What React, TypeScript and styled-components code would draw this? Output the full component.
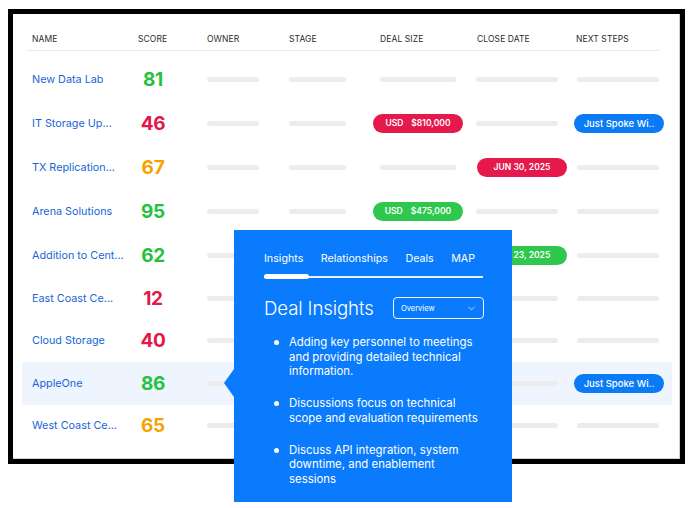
import React from "react";
import styled, { createGlobalStyle } from "styled-components";
import { ChevronDown } from "lucide-react";

const GlobalStyle = createGlobalStyle`
  html, body { margin: 0; padding: 0; background: #fff; }
  body { font-family: Inter, "Noto Sans", "Liberation Sans", sans-serif; -webkit-font-smoothing: antialiased; }
  * { box-sizing: border-box; }
`;

const COLS = "106px 69px 82px 84px 103px 98px 1fr";

const Page = styled.div`
  position: relative;
  width: 688px;
  height: 508px;
  padding: 9px 0 0 8px;
  overflow: hidden;
  background: #fff;
`;

const Screen = styled.div`
  width: 677px;
  height: 455px;
  border: 5px solid #000;
  box-shadow: inset -1px -1px 0 #cfcfcf;
  background: #fff;
  padding: 14px 0 0 9px;
`;

const Table = styled.div`
  width: 650px;
  display: flex;
  flex-direction: column;
`;

const HeaderRow = styled.div`
  display: grid;
  grid-template-columns: ${COLS};
  align-items: center;
  height: 23px;
  margin: 0 12px 6px 5px;
  padding-left: 5px;
  border-bottom: 1.5px solid #ebebeb;
`;

const HeaderCell = styled.div<{ $offset?: number }>`
  font-size: 8.5px;
  letter-spacing: 0.1px;
  color: #2b2b2b;
  text-transform: uppercase;
  padding-left: ${(p) => p.$offset ?? 0}px;
  white-space: nowrap;
`;

const Row = styled.div<{ $active?: boolean; $tall?: boolean }>`
  display: grid;
  grid-template-columns: ${COLS};
  align-items: center;
  height: ${(p) => (p.$tall ? 44 : 42.5)}px;
  padding-left: 10px;
  background: ${(p) => (p.$active ? "#eef5fe" : "transparent")};
`;

const Name = styled.div`
  font-size: 10.8px;
  color: #1766d4;
  white-space: nowrap;
`;

const Score = styled.div<{ $color: string }>`
  width: 30px;
  text-align: center;
  font-size: 19px;
  font-weight: 700;
  letter-spacing: -0.3px;
  color: ${(p) => p.$color};
`;

const Bar = styled.div<{ $w: number; $offset: number }>`
  width: ${(p) => p.$w}px;
  height: 5px;
  margin-left: ${(p) => p.$offset}px;
  border-radius: 3px;
  background: #ececec;
`;

const Pill = styled.div<{ $bg: string; $offset: number; $size?: number; $weight?: number }>`
  width: 90px;
  height: 19px;
  margin-left: ${(p) => p.$offset}px;
  border-radius: 10px;
  background: ${(p) => p.$bg};
  color: #fff;
  font-size: ${(p) => p.$size ?? 8.5}px;
  font-weight: ${(p) => p.$weight ?? 600};
  display: flex;
  align-items: center;
  justify-content: center;
  gap: 8px;
  white-space: nowrap;
`;

const Popup = styled.div`
  position: absolute;
  left: 234px;
  top: 230px;
  width: 278px;
  height: 272px;
  background: #0a7bfc;
  color: #fff;
  padding: 22px 28px 0 30px;
  &::before {
    content: "";
    position: absolute;
    left: -10px;
    top: 139px;
    border-right: 10px solid #0a7bfc;
    border-top: 14px solid transparent;
    border-bottom: 14px solid transparent;
  }
`;

const Tabs = styled.div`
  display: flex;
  gap: 17.5px;
  font-size: 10.7px;
  line-height: 14px;
  white-space: nowrap;
`;

const Tab = styled.div`
  color: #fff;
`;

const Track = styled.div`
  position: relative;
  width: 219px;
  height: 1.5px;
  margin-top: 10px;
  background: rgba(255, 255, 255, 0.9);
  &::before {
    content: "";
    position: absolute;
    left: 0;
    top: -1.75px;
    width: 45px;
    height: 5px;
    border-radius: 3px;
    background: #fff;
  }
`;

const TitleRow = styled.div`
  display: flex;
  align-items: center;
  justify-content: space-between;
  width: 220px;
  margin-top: 19.5px;
`;

const Title = styled.div`
  font-size: 18.6px;
  font-weight: 300;
  letter-spacing: -0.1px;
`;

const Select = styled.div`
  width: 91px;
  height: 22px;
  border: 1px solid rgba(255, 255, 255, 0.95);
  border-radius: 4px;
  display: flex;
  align-items: center;
  justify-content: space-between;
  padding: 0 6px 0 7px;
  font-size: 7.5px;
`;

const List = styled.ul`
  list-style: none;
  margin: 16px 0 0;
  padding: 0 0 0 25px;
  width: 220px;
  display: flex;
  flex-direction: column;
  gap: 17.5px;
`;

const Item = styled.li`
  position: relative;
  font-size: 11.4px;
  line-height: 14.5px;
  &::before {
    content: "";
    position: absolute;
    left: -15px;
    top: 5px;
    width: 5px;
    height: 5px;
    border-radius: 50%;
    background: #fff;
  }
`;

type Cell =
  | { kind: "bar" }
  | { kind: "pill"; bg: string; text: React.ReactNode; size?: number; weight?: number };

const RED = "#e5194b";
const GREEN = "#2ec84f";
const BLUE = "#0a7bf5";
const SCORE_GREEN = "#24c13e";
const SCORE_RED = "#e4164a";
const SCORE_ORANGE = "#f6a300";

const bar: Cell = { kind: "bar" };
const usd = (v: string, bg: string): Cell => ({
  kind: "pill",
  bg,
  text: (
    <>
      <span>USD</span>
      <span>{v}</span>
    </>
  ),
});
const datePill = (v: string, bg: string): Cell => ({ kind: "pill", bg, text: v });
const nextPill: Cell = { kind: "pill", bg: BLUE, text: "Just Spoke Wi..", size: 9.5, weight: 500 };

const rows: {
  name: string;
  score: number;
  color: string;
  deal: Cell;
  close: Cell;
  next: Cell;
  active?: boolean;
  tall?: boolean;
}[] = [
  { name: "New Data Lab", score: 81, color: SCORE_GREEN, deal: bar, close: bar, next: bar, tall: true },
  { name: "IT Storage Up...", score: 46, color: SCORE_RED, deal: usd("$810,000", RED), close: bar, next: nextPill, tall: true },
  { name: "TX Replication...", score: 67, color: SCORE_ORANGE, deal: bar, close: datePill("JUN 30, 2025", RED), next: bar, tall: true },
  { name: "Arena Solutions", score: 95, color: SCORE_GREEN, deal: usd("$475,000", GREEN), close: bar, next: bar, tall: true },
  { name: "Addition to Cent...", score: 62, color: SCORE_GREEN, deal: bar, close: datePill("JUN 23, 2025", GREEN), next: bar, tall: true },
  { name: "East Coast Ce...", score: 12, color: SCORE_RED, deal: bar, close: bar, next: bar },
  { name: "Cloud Storage", score: 40, color: SCORE_RED, deal: bar, close: bar, next: bar },
  { name: "AppleOne", score: 86, color: SCORE_GREEN, deal: bar, close: bar, next: nextPill, active: true },
  { name: "West Coast Ce...", score: 65, color: SCORE_ORANGE, deal: bar, close: bar, next: bar },
];

const renderCell = (c: Cell, barW: number, barOff: number, pillOff: number) =>
  c.kind === "bar" ? (
    <Bar $w={barW} $offset={barOff} />
  ) : (
    <Pill $bg={c.bg} $offset={pillOff} $size={c.size} $weight={c.weight}>
      {c.text}
    </Pill>
  );

export default function App() {
  return (
    <>
      <GlobalStyle />
      <Page>
        <Screen>
          <Table>
            <HeaderRow>
              <HeaderCell>Name</HeaderCell>
              <HeaderCell>Score</HeaderCell>
              <HeaderCell>Owner</HeaderCell>
              <HeaderCell>Stage</HeaderCell>
              <HeaderCell $offset={7}>Deal Size</HeaderCell>
              <HeaderCell $offset={1}>Close Date</HeaderCell>
              <HeaderCell $offset={2}>Next Steps</HeaderCell>
            </HeaderRow>
            {rows.map((r) => (
              <Row key={r.name} $active={r.active} $tall={r.tall}>
                <Name>{r.name}</Name>
                <Score $color={r.color}>{r.score}</Score>
                <Bar $w={52} $offset={0} />
                <Bar $w={57} $offset={0} />
                {renderCell(r.deal, 76, 7, 0)}
                {renderCell(r.close, 82, 0, 1)}
                {renderCell(r.next, 82, 3, 0)}
              </Row>
            ))}
          </Table>
        </Screen>
        <Popup>
          <Tabs>
            <Tab>Insights</Tab>
            <Tab>Relationships</Tab>
            <Tab>Deals</Tab>
            <Tab>MAP</Tab>
          </Tabs>
          <Track />
          <TitleRow>
            <Title>Deal Insights</Title>
            <Select>
              <span>Overview</span>
              <ChevronDown size={11} strokeWidth={1.5} />
            </Select>
          </TitleRow>
          <List>
            <Item>Adding key personnel to meetings and providing detailed technical information.</Item>
            <Item>Discussions focus on technical scope and evaluation requirements</Item>
            <Item>Discuss API integration, system downtime, and enablement sessions</Item>
          </List>
        </Popup>
      </Page>
    </>
  );
}
